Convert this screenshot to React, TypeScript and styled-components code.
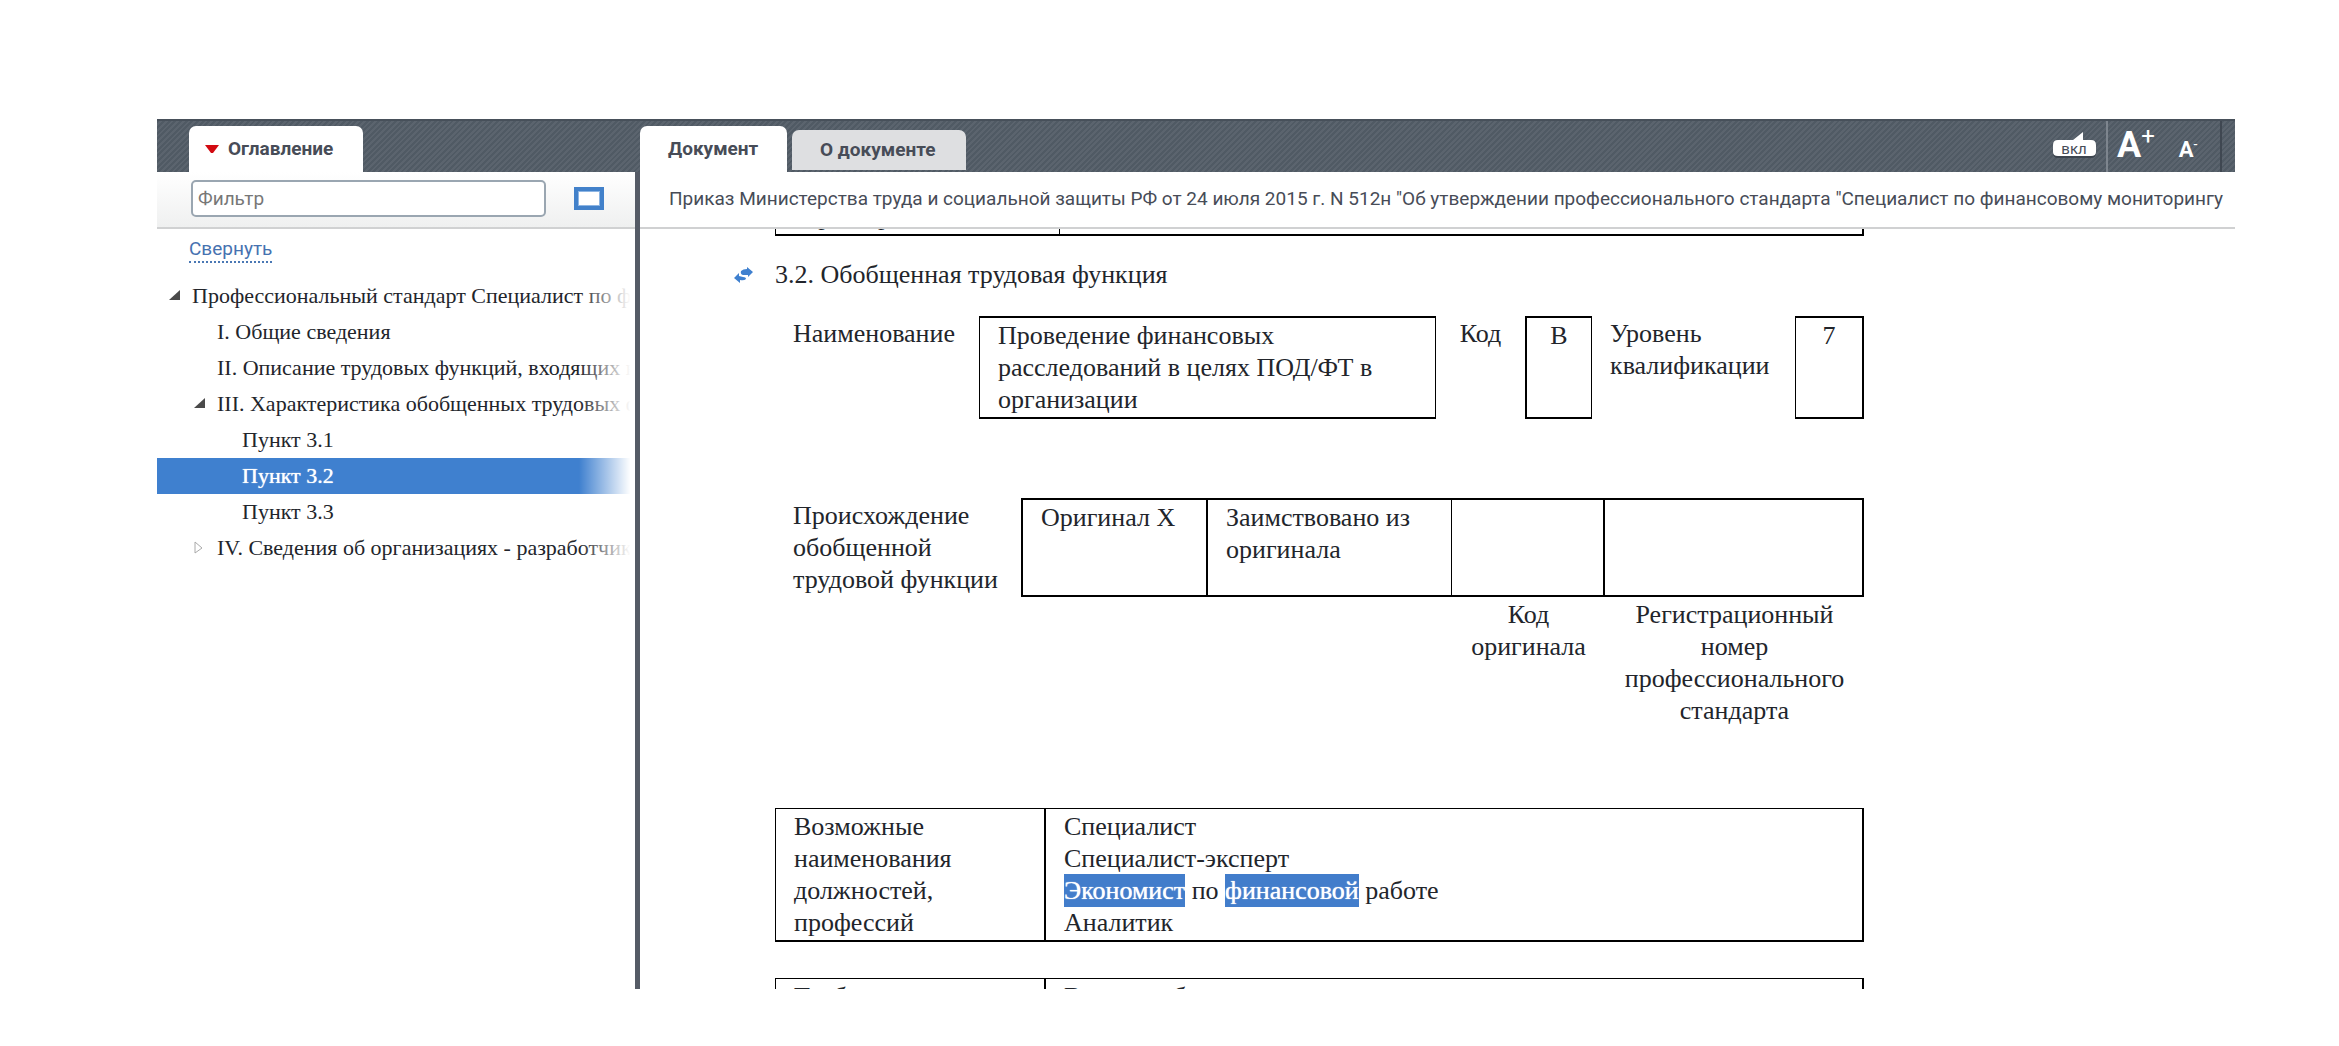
import React, { useState } from "react";
import styled, { createGlobalStyle } from "styled-components";

const sans = `Roboto, "Open Sans", sans-serif`;
const serif = `"Liberation Serif", "DejaVu Serif", serif`;
const blue = "#3f80cf";
const slate = "#555b66";

const GlobalStyle = createGlobalStyle`
  * { box-sizing: border-box; }
  body { margin: 0; background: #fff; font-family: ${sans}; color: #22252b; }
  button { border: 0; padding: 0; background: none; font: inherit; color: inherit; cursor: pointer; }
`;

const Page = styled.div`
  height: 100vh;
  padding: 119px 104px 57px 157px;
`;

const Frame = styled.div`
  display: flex;
  flex-direction: column;
  height: 100%;
  overflow: hidden;
`;

const Header = styled.header`
  flex: none;
  display: flex;
  height: 53px;
  border-top: 2px solid #47505a;
  background: repeating-linear-gradient(135deg, #505a64 0 2px, #5b646e 2px 4px);
`;

const HeaderSide = styled.div`
  flex: none;
  display: flex;
  align-items: flex-end;
  width: 483px;
  padding-left: 32px;
`;

const HeaderTabs = styled.div`
  flex: 1;
  display: flex;
  align-items: flex-end;
  gap: 5px;
`;

const Tab = styled.button<{ $width: number; $pad: number; $muted?: boolean }>`
  display: flex;
  align-items: center;
  gap: 9px;
  width: ${(p) => p.$width}px;
  height: ${(p) => (p.$muted ? 40 : 46)}px;
  margin-bottom: ${(p) => (p.$muted ? 2 : 0)}px;
  padding-left: ${(p) => p.$pad}px;
  border-radius: 7px 7px 0 0;
  background: ${(p) => (p.$muted ? "#dedfe1" : "#fff")};
  color: #474c57;
  font-size: 19px;
  font-weight: 700;
  line-height: 24px;
  white-space: nowrap;
`;

const Tools = styled.div`
  flex: none;
  display: flex;
  align-items: stretch;
`;

const Toggle = styled.button`
  display: flex;
  align-items: center;
  padding: 0 10px 4px;
`;

const FontTools = styled.div`
  display: flex;
  align-items: baseline;
  gap: 24px;
  width: 116px;
  padding: 0 0 0 9px;
  border-left: 2px solid #7d858e;
  border-right: 2px solid #3f4751;
  margin-right: 13px;
  color: #fff;
`;

const FontButton = styled.button<{ $large?: boolean }>`
  color: #fff;
  font-size: ${(p) => (p.$large ? 36 : 22)}px;
  font-weight: 700;
  line-height: 48px;
  sup {
    font-size: ${(p) => (p.$large ? 24 : 14)}px;
    font-weight: 400;
    line-height: 0;
  }
`;

const Columns = styled.div`
  flex: 1;
  display: flex;
  min-height: 0;
`;

const Sidebar = styled.aside`
  flex: none;
  width: 483px;
  border-right: 5px solid ${slate};
  overflow: hidden;
`;

const FilterBar = styled.div`
  display: flex;
  align-items: center;
  gap: 28px;
  height: 57px;
  padding: 0 31px 2px 34px;
  border-bottom: 2px solid #d0d1d2;
  background: linear-gradient(#fff, #eff0f0);
`;

const FilterInput = styled.input`
  flex: 1;
  min-width: 0;
  height: 37px;
  padding: 0 5px;
  border: 2px solid #9aa6b1;
  border-radius: 5px;
  background: #fff;
  color: #474c57;
  font-family: ${sans};
  font-size: 19px;
  &::placeholder { color: #777; opacity: 1; }
`;

const PanelToggle = styled.button`
  width: 30px;
  height: 23px;
  border: 4px solid #4281ca;
  outline: 1px solid #8db5e3;
  outline-offset: -5px;
  background: #fff;
`;

const Collapse = styled.button`
  display: block;
  margin: 7px 0 15px 32px;
  border-bottom: 2px dotted #4a78b4;
  color: #4672b0;
  font-size: 19px;
  line-height: 25px;
`;

const Tree = styled.ul`
  margin: 0;
  padding: 0;
  list-style: none;
`;

const TreeRow = styled.li<{ $level: number; $active?: boolean }>`
  position: relative;
  display: flex;
  align-items: center;
  gap: 11px;
  height: 36px;
  padding-left: ${(p) => [11, 36, 61][p.$level]}px;
  overflow: hidden;
  white-space: nowrap;
  background: ${(p) => (p.$active ? blue : "none")};
  color: ${(p) => (p.$active ? "#fff" : "#22252b")};
  font-family: ${serif};
  font-size: 22px;
  text-shadow: ${(p) => (p.$active ? "0 0 1px #fff" : "none")};
  &::after {
    content: "";
    position: absolute;
    inset: 0 0 0 auto;
    width: 56px;
    background: linear-gradient(to right, rgba(255, 255, 255, 0), #fff 92%);
  }
`;

const Marker = styled.svg`
  flex: none;
  width: 13px;
  height: 14px;
`;

const TreeLink = styled.a`
  color: inherit;
  text-decoration: none;
`;

const Main = styled.main`
  flex: 1;
  display: flex;
  flex-direction: column;
  min-width: 0;
`;

const Title = styled.h1`
  flex: none;
  height: 57px;
  margin: 0;
  padding-left: 29px;
  border-bottom: 2px solid #d0d1d2;
  overflow: hidden;
  white-space: nowrap;
  color: #474c57;
  font-size: 19px;
  font-weight: 400;
  line-height: 54px;
`;

const DocScroll = styled.div`
  flex: 1;
  min-height: 0;
  overflow: hidden;
  padding-left: 94px;
  font-family: ${serif};
  font-size: 26px;
  line-height: 32px;
`;

/* The document is opened scrolled to section 3.2. */
const DocBody = styled.article`
  width: 1130px;
  margin-top: -31px;
`;

const Section = styled.h2`
  display: flex;
  align-items: center;
  gap: 22px;
  margin: 23px 0 25px;
  font-size: inherit;
  font-weight: 400;
`;

const Table = styled.table<{ $gap?: number }>`
  table-layout: fixed;
  width: 1089px;
  margin: 0 0 ${(p) => p.$gap ?? 0}px 41px;
  border-spacing: 0;
`;

const Cell = styled.td<{ $border?: string; $center?: boolean }>`
  padding: ${(p) => (p.$center ? "2px 8px 1px" : "2px 6px 1px 18px")};
  border: 0 solid #000;
  border-width: ${(p) => p.$border ?? "0"};
  vertical-align: top;
  text-align: ${(p) => (p.$center ? "center" : "left")};
`;

const Hit = styled.mark`
  padding: 2px 0;
  background: #427dcb;
  color: #fff;
  text-shadow: 0 0 1px #fff;
`;

const Cols = ({ widths }: { widths: number[] }) => (
  <colgroup>
    {widths.map((w, i) => (
      <col key={i} width={w} />
    ))}
  </colgroup>
);

type Node = { text: string; level: number; state?: "open" | "closed" };

const nodes: Node[] = [
  { text: "Профессиональный стандарт Специалист по финансовому мониторингу", level: 0, state: "open" },
  { text: "I. Общие сведения", level: 1 },
  { text: "II. Описание трудовых функций, входящих в профессиональный стандарт", level: 1 },
  { text: "III. Характеристика обобщенных трудовых функций", level: 1, state: "open" },
  { text: "Пункт 3.1", level: 2 },
  { text: "Пункт 3.2", level: 2 },
  { text: "Пункт 3.3", level: 2 },
  { text: "IV. Сведения об организациях - разработчиках", level: 1, state: "closed" },
];

const TreeMarker = ({ state }: { state?: Node["state"] }) => (
  <Marker viewBox="0 0 13 14" aria-hidden="true">
    {state === "open" && <path d="M12 1v10H1z" fill="#4a4a4a" />}
    {state === "closed" && <path d="M2 1v11l7-5z" fill="#fff" stroke="#aaa" />}
  </Marker>
);

export default function App() {
  const [active, setActive] = useState(5);
  return (
    <Page>
      <GlobalStyle />
      <Frame>
        <Header>
          <HeaderSide>
            <Tab $width={174} $pad={16}>
              <svg width="14" height="8" viewBox="0 0 14 8" aria-hidden="true">
                <path d="M0 0h14L8 8H6z" fill="#d20a11" />
              </svg>
              Оглавление
            </Tab>
          </HeaderSide>
          <HeaderTabs>
            <Tab $width={147} $pad={28}>
              Документ
            </Tab>
            <Tab $width={174} $pad={28} $muted>
              О документе
            </Tab>
          </HeaderTabs>
          <Tools>
            <Toggle aria-label="вкл">
              <svg width="43" height="28" viewBox="0 0 43 28" aria-hidden="true">
                <path d="M5 10H20L30 2v8h8q5 0 5 5v7q0 5-5 5H5q-5 0-5-5v-7q0-5 5-5z" fill="#3c444e" />
                <path d="M5 9H20L30 1v8h8q5 0 5 5v7q0 4-5 4H5q-5 0-5-4v-7q0-5 5-5z" fill="#fff" />
                <text x="21" y="23" textAnchor="middle" fontFamily="Roboto, sans-serif" fontSize="15" fill="#474c57">
                  вкл
                </text>
              </svg>
            </Toggle>
            <FontTools>
              <FontButton $large aria-label="Увеличить шрифт">
                A<sup>+</sup>
              </FontButton>
              <FontButton aria-label="Уменьшить шрифт">
                A<sup>-</sup>
              </FontButton>
            </FontTools>
          </Tools>
        </Header>
        <Columns>
          <Sidebar>
            <FilterBar>
              <FilterInput type="text" placeholder="Фильтр" aria-label="Фильтр" />
              <PanelToggle aria-label="Панель" />
            </FilterBar>
            <Collapse>Свернуть</Collapse>
            <Tree>
              {nodes.map((n, i) => (
                <TreeRow key={n.text} $level={n.level} $active={i === active}>
                  <TreeMarker state={n.state} />
                  <TreeLink href="#" onClick={() => setActive(i)}>
                    {n.text}
                  </TreeLink>
                </TreeRow>
              ))}
            </Tree>
          </Sidebar>
          <Main>
            <Title>
              Приказ Министерства труда и социальной защиты РФ от 24 июля 2015 г. N 512н "Об утверждении
              профессионального стандарта "Специалист по финансовому мониторингу
            </Title>
            <DocScroll>
              <DocBody>
                <Table>
                  <Cols widths={[285, 804]} />
                  <tbody>
                    <tr>
                      <Cell $border="1px 1px 2px 1px">характеристики</Cell>
                      <Cell $border="1px 2px 2px 0" />
                    </tr>
                  </tbody>
                </Table>
                <Section>
                  <svg width="19" height="16" viewBox="0 0 19 16" aria-hidden="true">
                    <path
                      d="M7 4q2-2 6-2V0l6 5-5 5V8H9Q6 7 7 4zM12 12q-2 2-6 1v3L0 11l5-5v3l4 1q3 0 3 2z"
                      fill="#3f80cf"
                    />
                  </svg>
                  3.2. Обобщенная трудовая функция
                </Section>
                <Table $gap={79}>
                  <Cols widths={[204, 457, 89, 67, 203, 69]} />
                  <tbody>
                    <tr>
                      <Cell>Наименование</Cell>
                      <Cell $border="2px 1px 2px 1px">
                        Проведение финансовых
                        <br />
                        расследований в целях ПОД/ФТ в организации
                      </Cell>
                      <Cell $center>Код</Cell>
                      <Cell $center $border="2px 1px 2px 2px">
                        B
                      </Cell>
                      <Cell>Уровень квалификации</Cell>
                      <Cell $center $border="2px 2px 2px 1px">
                        7
                      </Cell>
                    </tr>
                  </tbody>
                </Table>
                <Table $gap={80}>
                  <Cols widths={[246, 187, 244, 153, 259]} />
                  <tbody>
                    <tr>
                      <Cell>
                        Происхождение обобщенной
                        <br />
                        трудовой функции
                      </Cell>
                      <Cell $border="2px">Оригинал X</Cell>
                      <Cell $border="2px 1px 2px 0">Заимствовано из оригинала</Cell>
                      <Cell $border="2px 2px 2px 0" />
                      <Cell $border="2px 2px 2px 0" />
                    </tr>
                    <tr>
                      <Cell />
                      <Cell />
                      <Cell />
                      <Cell $center>Код оригинала</Cell>
                      <Cell $center>
                        Регистрационный номер профессионального стандарта
                      </Cell>
                    </tr>
                  </tbody>
                </Table>
                <Table $gap={36}>
                  <Cols widths={[271, 818]} />
                  <tbody>
                    <tr>
                      <Cell $border="1px 2px 2px 1px">Возможные наименования должностей, профессий</Cell>
                      <Cell $border="1px 2px 2px 0">
                        Специалист
                        <br />
                        Специалист-эксперт
                        <br />
                        <Hit>Экономист</Hit> по <Hit>финансовой</Hit> работе
                        <br />
                        Аналитик
                      </Cell>
                    </tr>
                  </tbody>
                </Table>
                <Table>
                  <Cols widths={[271, 818]} />
                  <tbody>
                    <tr>
                      <Cell $border="1px 2px 2px 1px">Требования к образованию и обучению</Cell>
                      <Cell $border="1px 2px 2px 0">Высшее образование</Cell>
                    </tr>
                  </tbody>
                </Table>
              </DocBody>
            </DocScroll>
          </Main>
        </Columns>
      </Frame>
    </Page>
  );
}
